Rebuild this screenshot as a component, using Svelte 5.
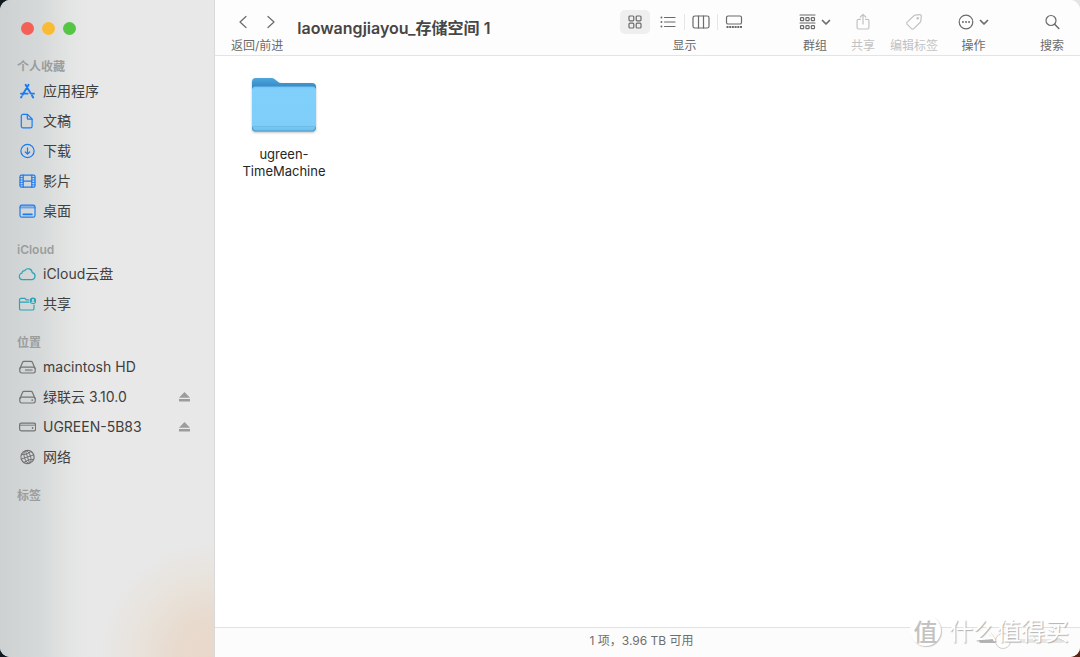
<script>
  const sections = [
    {
      title: '个人收藏',
      tint: 'blue',
      items: [
        { name: '应用程序', icon: 'apps' },
        { name: '文稿', icon: 'doc' },
        { name: '下载', icon: 'download' },
        { name: '影片', icon: 'movie' },
        { name: '桌面', icon: 'desktop' },
      ],
    },
    {
      title: 'iCloud',
      tint: 'teal',
      items: [
        { name: 'iCloud云盘', icon: 'cloud' },
        { name: '共享', icon: 'shared' },
      ],
    },
    {
      title: '位置',
      tint: 'gray',
      items: [
        { name: 'macintosh HD', icon: 'disk' },
        { name: '绿联云 3.10.0', icon: 'external', eject: true },
        { name: 'UGREEN-5B83', icon: 'server', eject: true },
        { name: '网络', icon: 'globe' },
      ],
    },
    { title: '标签', tint: 'gray', items: [] },
  ];

  const views = [
    { id: 'grid', label: '图标' },
    { id: 'list', label: '列表' },
    { id: 'columns', label: '分栏' },
    { id: 'gallery', label: '画廊' },
  ];

  let view = $state('grid');
  let iconSize = $state(23);
</script>

{#snippet chevron()}
  <svg class="chevron" viewBox="0 0 10 10"><path d="M1.5 3.5 5 7l3.5-3.5" stroke-width="1.7" /></svg>
{/snippet}

{#snippet icon(name)}
  <svg class="icon" viewBox="0 0 18 18">
    {#if name === 'apps'}
      <path d="M10.6 2.8 4.6 12.8M3.6 14.6l-.5.8M7.6 2.8l5 8.4M14 13.4l1.2 2" stroke-width="1.9" />
      <path d="M3 11.6h6.6M13.4 11.6H16" stroke-width="1.9" />
    {:else if name === 'doc'}
      <path d="M4.9 2.4h4.6l4.6 4.6v7.2a1.6 1.6 0 0 1-1.6 1.6H4.9a1.6 1.6 0 0 1-1.6-1.6V4a1.6 1.6 0 0 1 1.6-1.6z" />
      <path d="M9.3 2.6v3.6a1 1 0 0 0 1 1h3.6" />
    {:else if name === 'download'}
      <circle cx="9.5" cy="9" r="6.6" />
      <path d="M9.5 5.8v6.2M7.3 10l2.2 2.1 2.2-2.1" />
    {:else if name === 'movie'}
      <rect x="2" y="3.2" width="15" height="12" rx="1.4" />
      <path d="M5.2 3.2v12M13.8 3.2v12M5.2 9.2h8.6" />
      <path d="M2 5.6h3M2 8h3M2 10.4h3M2 12.8h3M14 5.6h3M14 8h3M14 10.4h3M14 12.8h3" stroke-width="0.9" />
    {:else if name === 'desktop'}
      <rect x="2" y="3.2" width="15" height="12" rx="1.8" />
      <path d="M2 5.8h15" stroke-width="0.8" />
      <path d="M2.4 4.4h14.2" opacity="0.4" />
      <path d="M5.4 12.4h8.4" stroke-width="1.9" />
    {:else if name === 'cloud'}
      <path d="M5.2 14.6a3.3 3.3 0 0 1-1.2-6.5 2.6 2.6 0 0 1 2.7-2.5 4.1 4.1 0 0 1 7.5 2.1 3.5 3.5 0 0 1-.2 6.9z" />
    {:else if name === 'shared'}
      <path d="M10.6 4.8H8.2L7 3.4H3.1A1.6 1.6 0 0 0 1.5 5v8.4A1.6 1.6 0 0 0 3.1 15h11.3a1.6 1.6 0 0 0 1.6-1.6V10" />
      <path d="M1.6 7.2h9.2" />
      <circle class="solid" cx="15" cy="5.8" r="3.3" />
      <circle class="hole" cx="15" cy="4.9" r="1" />
      <path class="hole" d="M13.2 7.7a1.8 1.5 0 0 1 3.6 0z" />
    {:else if name === 'disk' || name === 'external'}
      <path d="M2 10.6 4.5 4.5A1.7 1.7 0 0 1 6.100 3.400h6.800a1.700 1.700 0 0 1 1.600 1.100L17 10.600" />
      <rect x="1.8" y="9.2" width="15.4" height="5.8" rx="1.9" />
      {#if name === 'disk'}
        <path d="M7 12.100h7.600" stroke-width="2.200" stroke-linecap="butt" opacity="0.55" />
      {:else}
        <circle class="solid" cx="14.2" cy="12.1" r="0.9" />
      {/if}
    {:else if name === 'server'}
      <rect x="1.6" y="5.2" width="16" height="7.6" rx="1.8" />
      <path d="M2 7.2h15" stroke-width="0.9" />
      <circle class="solid" cx="14.6" cy="10" r="0.9" />
    {:else if name === 'globe'}
      <g transform="rotate(-18 9.5 9)">
        <circle cx="9.5" cy="9" r="6.6" />
        <ellipse cx="9.5" cy="9" rx="3.1" ry="6.6" stroke-width="0.9" />
        <path d="M9.5 2.4v13.2M2.9 9h13.2M4.3 5q5.2 2.200 10.400 0M4.300 13q5.200-2.200 10.400 0" stroke-width="0.9" />
      </g>
    {/if}
  </svg>
{/snippet}

<div class="screen">
  <div class="window">
    <aside class="sidebar">
      <div class="lights">
        <button class="light red" aria-label="关闭"></button>
        <button class="light yellow" aria-label="最小化"></button>
        <button class="light green" aria-label="缩放"></button>
      </div>

      {#each sections as section}
        <section class="group {section.tint}">
          <h2>{section.title}</h2>
          {#if section.items.length > 0}
            <ul>
              {#each section.items as item}
                <li>
                  <a href="#{item.icon}">
                    {@render icon(item.icon)}
                    <span>{item.name}</span>
                  </a>
                  {#if item.eject}
                    <button class="eject" aria-label="推出 {item.name}">
                      <svg viewBox="0 0 11 10"><path d="M5.5 0 11 5.8H0zM0 7h11v2.6H0z" /></svg>
                    </button>
                  {/if}
                </li>
              {/each}
            </ul>
          {/if}
        </section>
      {/each}
    </aside>

    <main class="main">
      <header class="toolbar">
        <div class="tool">
          <div class="tool-icons arrows">
            <button aria-label="返回">
              <svg width="10" height="14" viewBox="0 0 10 14"><path d="M8 1.5 2 7l6 5.5" /></svg>
            </button>
            <button aria-label="前进">
              <svg width="10" height="14" viewBox="0 0 10 14"><path d="M2 1.5 8 7l-6 5.5" /></svg>
            </button>
          </div>
          <span class="caption">返回/前进</span>
        </div>

        <h1>laowangjiayou_存储空间 1</h1>

        <div class="tool views">
          <div class="tool-icons switcher">
            {#each views as v, i}
              {#if i > 0}
                <span class="sep" class:hidden={i === 1}></span>
              {/if}
              <button
                class="view-btn"
                class:active={view === v.id}
                aria-label={v.label}
                onclick={() => (view = v.id)}
              >
                <svg width="18" height="14" viewBox="0 0 18 14">
                  {#if v.id === 'grid'}
                    <rect x="3" y="1" width="4.8" height="4.8" rx="1" />
                    <rect x="10.2" y="1" width="4.8" height="4.8" rx="1" />
                    <rect x="3" y="8.2" width="4.8" height="4.8" rx="1" />
                    <rect x="10.2" y="8.2" width="4.8" height="4.8" rx="1" />
                  {:else if v.id === 'list'}
                    <path d="M5.5 2.5h10.500M5.500 7h10.500M5.500 11.500h10.500" />
                    <path d="M2.4 2.5h.1M2.4 7h.1M2.4 11.5h.1" stroke-width="1.8" />
                  {:else if v.id === 'columns'}
                    <rect x="1" y="1" width="16" height="12" rx="1.8" />
                    <path d="M6.5 1v12M11.5 1v12" />
                  {:else}
                    <rect x="1.5" y="1" width="15" height="8" rx="1.6" />
                    <path d="M1.500 12h15.500" stroke-width="2" stroke-dasharray="2 0.7" stroke-linecap="butt" />
                  {/if}
                </svg>
              </button>
            {/each}
          </div>
          <span class="caption">显示</span>
        </div>

        <div class="actions">
          <button class="tool">
            <span class="tool-icons">
              <svg width="17" height="16" viewBox="0 0 17 16">
                <path d="M1 1h15M1 9h15" stroke-width="1.1" />
                <rect x="1.5" y="3.7" width="3.2" height="3" rx="0.8" />
                <rect x="6.9" y="3.7" width="3.2" height="3" rx="0.8" />
                <rect x="12.3" y="3.7" width="3.2" height="3" rx="0.8" />
                <rect x="1.5" y="11.7" width="3.2" height="3" rx="0.8" />
                <rect x="6.9" y="11.7" width="3.2" height="3" rx="0.8" />
                <rect x="12.3" y="11.7" width="3.2" height="3" rx="0.8" />
              </svg>
              {@render chevron()}
            </span>
            <span class="caption">群组</span>
          </button>

          <div class="pair">
            <button class="tool" disabled>
              <span class="tool-icons">
                <svg width="14" height="18" viewBox="0 0 14 18">
                  <path d="M4.5 6.3H2.6A1.5 1.5 0 0 0 1.1 7.8v6.7A1.5 1.5 0 0 0 2.6 16h8.8a1.5 1.5 0 0 0 1.5-1.5V7.8a1.5 1.5 0 0 0-1.5-1.5H9.5" />
                  <path d="M7 11V1.5M4.3 4 7 1.3 9.7 4" />
                </svg>
              </span>
              <span class="caption">共享</span>
            </button>
            <button class="tool" disabled>
              <span class="tool-icons">
                <svg width="18" height="18" viewBox="0 0 18 18">
                  <path d="M10.200 2.200 14.600 1.600a1.500 1.500 0 0 1 1.700 1.700l-.5 4.800a2 2 0 0 1-.6 1.200l-6.400 6.400a1.600 1.600 0 0 1-2.300 0L2.200 11.400a1.600 1.600 0 0 1 0-2.300l6.700-6.300a2 2 0 0 1 1.300-.6z" />
                  <circle cx="12.7" cy="5.2" r="0.7" />
                </svg>
              </span>
              <span class="caption">编辑标签</span>
            </button>
          </div>

          <button class="tool">
            <span class="tool-icons">
              <svg width="16" height="16" viewBox="0 0 16 16">
                <circle cx="8" cy="8" r="6.8" />
                <path d="M4.9 8H5M8 8h.1M11 8h.1" stroke-width="1.8" />
              </svg>
              {@render chevron()}
            </span>
            <span class="caption">操作</span>
          </button>

          <button class="tool search">
            <span class="tool-icons">
              <svg width="16" height="16" viewBox="0 0 16 16">
                <circle cx="7" cy="6.5" r="5" />
                <path d="m10.700 10.300 4.100 4.200" stroke-width="1.5" />
              </svg>
            </span>
            <span class="caption">搜索</span>
          </button>
        </div>
      </header>

      <div class="files">
        <a class="file" href="#ugreen-TimeMachine">
          <svg class="folder" viewBox="0 0 64 56">
            <defs>
              <linearGradient id="back" x1="0" y1="0" x2="0" y2="1">
                <stop offset="0" stop-color="#4fa5dc" />
                <stop offset="0.2" stop-color="#3388c4" />
              </linearGradient>
              <linearGradient id="front" x1="0" y1="0" x2="0" y2="1">
                <stop offset="0" stop-color="#72c4f3" />
                <stop offset="0.06" stop-color="#81cffb" />
                <stop offset="0.85" stop-color="#7fcefa" />
                <stop offset="1" stop-color="#68bbea" />
              </linearGradient>
            </defs>
            <path d="M0 5A4 4 0 0 1 4 1h15c1.500 0 2.600.4 3.700 1.300l3.200 2.400c1 .8 2 1.200 3.300 1.200H60a4 4 0 0 1 4 4V50H0z" fill="url(#back)" />
            <path d="M0 13a3.500 3.500 0 0 1 3.500-3.500h57A3.500 3.500 0 0 1 64 13v37.500a4 4 0 0 1-4 4H4a4 4 0 0 1-4-4z" fill="url(#front)" />
            <path d="M.5 50.500A3.500 3.500 0 0 0 4 54h56a3.500 3.500 0 0 0 3.500-3.500" fill="none" stroke="#559fc9" />
            <path d="M1 49.500h62" stroke="#69b7e2" stroke-width="0.8" />
          </svg>
          <span>ugreen-<br />TimeMachine</span>
        </a>
      </div>

      <footer class="status">
        <p>1 项，3.96 TB 可用</p>
        <input
          type="range"
          min="0"
          max="100"
          aria-label="图标大小"
          bind:value={iconSize}
          style="--fill: {iconSize}%"
        />
      </footer>
    </main>
  </div>

  <div class="watermark">
    <span class="badge">值</span>
    <span class="brand">什么值得买</span>
  </div>
</div>

<style>
  :global(body) {
    margin: 0;
  }

  .screen {
    position: relative;
    height: 100vh;
    overflow: hidden;
    background:
      radial-gradient(circle at top right, #e4e4e4 0 30px, transparent 30px),
      radial-gradient(circle at bottom right, #5c2415 0 30px, transparent 30px),
      #0e1a1f;
    font-family: Inter, 'Noto Sans CJK SC', sans-serif;
    color: #3f4040;
  }

  .window {
    display: flex;
    height: 100%;
    border-radius: 10px;
    overflow: hidden;
    background: #fff;
  }

  button {
    padding: 0;
    border: 0;
    background: none;
    color: inherit;
    font: inherit;
  }

  a {
    color: inherit;
    text-decoration: none;
  }

  svg {
    display: block;
    flex: none;
    fill: none;
    stroke: currentColor;
    stroke-width: 1.2;
    stroke-linecap: round;
    stroke-linejoin: round;
  }

  .sidebar {
    box-sizing: border-box;
    flex: none;
    width: 215px;
    border-right: 1px solid #d9d9d9;
    background:
      radial-gradient(circle at 100% 100%, #e9d8ca 0, #e8dace 40px, rgba(232, 223, 211, 0.7) 70px, rgba(232, 232, 226, 0) 115px),
      linear-gradient(90deg, #cdd1d2 0, #d6d9d9 40px, #e3e5e4 70px, #e8e8e8 90px);
  }

  .lights {
    display: flex;
    align-items: center;
    gap: 8px;
    height: 56px;
    margin-bottom: 2px;
    padding-left: 21px;
  }

  .light {
    width: 13px;
    height: 13px;
    border-radius: 50%;
  }

  .red {
    background: #f45f56;
  }

  .yellow {
    background: #f9bb35;
  }

  .green {
    background: #54c644;
  }

  .group {
    margin-bottom: 15px;
  }

  .group h2 {
    margin: 0;
    padding-left: 17px;
    font-size: 12px;
    font-weight: 600;
    line-height: 18px;
    color: #9b9d9d;
  }

  .group ul {
    margin: 0;
    padding: 0;
    list-style: none;
  }

  .group li {
    display: flex;
    align-items: center;
    justify-content: space-between;
    height: 30px;
    padding: 0 24px 0 18px;
  }

  .group a {
    display: flex;
    align-items: center;
    gap: 7px;
    font-size: 14px;
    line-height: 18px;
    white-space: nowrap;
  }

  .icon {
    width: 18px;
    height: 18px;
  }

  .blue .icon {
    color: #1a7bf2;
  }

  .teal .icon {
    color: #2da3b8;
  }

  .gray .icon {
    color: #737575;
  }

  .solid {
    fill: currentColor;
    stroke: none;
  }

  .hole {
    fill: #e0e4e4;
    stroke: none;
  }

  .eject svg {
    width: 11px;
    height: 10px;
    fill: #9b9c9c;
    stroke: none;
  }

  .main {
    display: flex;
    flex: 1;
    flex-direction: column;
    min-width: 0;
  }

  .toolbar {
    display: flex;
    height: 55px;
    padding: 0 16px;
    border-bottom: 1px solid #e4e4e4;
    background: #fdfdfd;
    color: #6b6b6b;
  }

  .tool {
    display: flex;
    flex-direction: column;
    align-items: center;
    gap: 3px;
    padding-top: 10px;
  }

  .tool-icons {
    display: flex;
    align-items: center;
    justify-content: center;
    gap: 5px;
    height: 24px;
  }

  .caption {
    font-size: 12px;
    line-height: 17px;
    white-space: nowrap;
  }

  .arrows {
    gap: 18px;
  }

  .toolbar h1 {
    flex: 1;
    margin: 0;
    padding-left: 14px;
    font-size: 16px;
    font-weight: 600;
    line-height: 56px;
    white-space: nowrap;
    color: #464646;
  }

  .views {
    margin-right: 50px;
  }

  .switcher {
    gap: 1px;
  }

  .view-btn {
    display: flex;
    align-items: center;
    justify-content: center;
    width: 30px;
    height: 24px;
    border-radius: 5px;
  }

  .view-btn.active {
    background: #efefef;
  }

  .sep {
    width: 1px;
    height: 16px;
    background: #e6e6e6;
  }

  .sep.hidden {
    visibility: hidden;
  }

  .actions {
    display: flex;
    gap: 20px;
  }

  .pair {
    display: flex;
    gap: 15px;
  }

  .tool:disabled {
    color: #c2c2c2;
  }

  .search {
    margin-left: 31px;
  }

  .chevron {
    width: 10px;
    height: 10px;
  }

  .files {
    flex: 1;
    padding: 21px 13px;
  }

  .file {
    display: flex;
    flex-direction: column;
    align-items: center;
    gap: 13px;
    width: 112px;
    font-size: 13px;
    line-height: 17px;
    text-align: center;
    color: #262626;
  }

  .folder {
    width: 64px;
    height: 56px;
    stroke: none;
    filter: drop-shadow(0 1px 1px rgba(0, 0, 0, 0.25));
  }

  .status {
    display: grid;
    grid-template-columns: 1fr auto 1fr;
    align-items: center;
    height: 26px;
    padding: 0 16px 3px 4px;
    border-top: 1px solid #e2e2e2;
    background: #fcfcfc;
  }

  .status p {
    grid-column: 2;
    margin: 0;
    font-size: 12px;
    line-height: 16px;
    color: #6e6e6e;
  }

  .status input {
    justify-self: end;
    width: 85px;
    height: 18px;
    margin: 0;
    appearance: none;
    background: none;
  }

  .status input::-webkit-slider-runnable-track {
    height: 4px;
    border-radius: 2px;
    background: linear-gradient(90deg, #b4b4b4 var(--fill), #e6e6e6 var(--fill));
  }

  .status input::-webkit-slider-thumb {
    width: 16px;
    height: 16px;
    margin-top: -6px;
    border: 1px solid #cfcfcf;
    border-radius: 50%;
    appearance: none;
    background: #fff;
  }

  /* site mark stamped over the window corner */
  .watermark {
    position: absolute;
    right: 11px;
    bottom: 10px;
    display: flex;
    align-items: center;
    gap: 8px;
    pointer-events: none;
    font-family: 'Noto Sans CJK SC', sans-serif;
  }

  .badge {
    width: 31px;
    height: 31px;
    border-radius: 50%;
    background: #fff;
    box-shadow: 1px 1px 1px #c4c4c4;
    font-size: 24px;
    font-weight: 500;
    line-height: 31px;
    text-align: center;
    color: #c2c2c2;
  }

  .brand {
    font-size: 24px;
    line-height: 34px;
    color: #fff;
    text-shadow: 1px 1px 1px #b0b0b0;
  }
</style>
